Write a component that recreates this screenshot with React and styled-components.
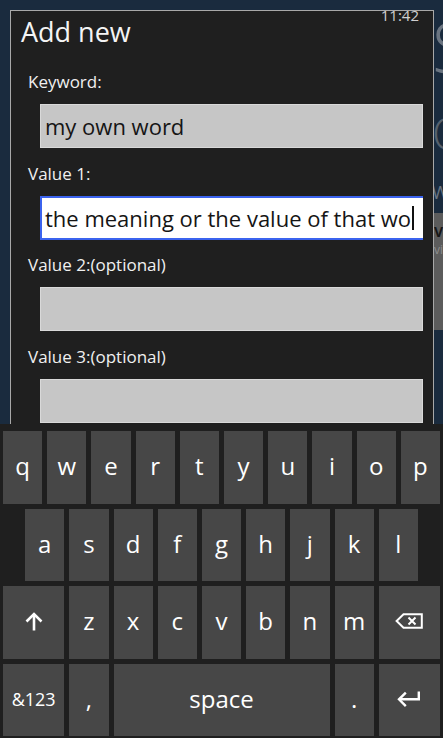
import React from "react";
import styled, { createGlobalStyle } from "styled-components";

const GlobalStyle = createGlobalStyle`
  html, body {
    margin: 0;
    padding: 0;
    width: 443px;
    height: 738px;
    overflow: hidden;
    background: #1a2b3e;
  }
  body {
    font-family: "Open Sans", "Noto Sans", sans-serif;
  }
`;

const Screen = styled.div`
  position: relative;
  width: 443px;
  height: 738px;
  overflow: hidden;
  background: #1a2b3e;
`;

/* the page behind the dialog, only a sliver shows on the right */
const Backdrop = styled.div`
  display: flex;
  flex-direction: column;
  padding: 11px 0 0 432px;
  white-space: nowrap;
`;

const BigWord = styled.div`
  font-size: ${(p) => p.$size}px;
  line-height: 1;
  font-weight: 300;
  color: ${(p) => p.$color};
  margin-top: ${(p) => p.$gap || 0}px;
`;

const SmallWord = styled.div`
  font-size: 18px;
  line-height: 22px;
  color: #6a7683;
  margin-top: ${(p) => p.$gap || 0}px;
`;

const BackPanel = styled.div`
  margin: 10px 0 0 -40px;
  padding: 9px 0 0 42px;
  height: 108px;
  background: #5c5c5c;
  div:first-child {
    font-size: 14px;
    font-weight: 700;
    color: #161616;
  }
  div:last-child {
    font-size: 12px;
    color: #8d8d8d;
  }
`;

const Clock = styled.div`
  position: absolute;
  top: 5px;
  right: 24px;
  font-size: 15px;
  line-height: 20px;
  color: #cfcfcf;
  z-index: 3;
`;

const Dialog = styled.div`
  position: absolute;
  top: 10px;
  left: 10px;
  width: 424px;
  bottom: -20px;
  box-sizing: border-box;
  border: 1px solid #a8a8a8;
  background: #1f1f1f;
  padding: 3px 10px 0 10px;
  display: flex;
  flex-direction: column;
`;

const Title = styled.h1`
  margin: 0;
  font-size: 27px;
  line-height: 36px;
  font-weight: 400;
  color: #f4f4f4;
`;

const Form = styled.div`
  display: flex;
  flex-direction: column;
  padding-left: 7px;
  margin-top: 21px;
`;

const Field = styled.div`
  display: flex;
  flex-direction: column;
  & + & {
    margin-top: 14.5px;
  }
`;

const Label = styled.div`
  font-size: 17px;
  line-height: 22px;
  color: #f0f0f0;
  margin-bottom: 11px;
`;

const Box = styled.div`
  margin-left: 12px;
  height: 44px;
  box-sizing: border-box;
  display: flex;
  align-items: center;
  font-size: 22px;
  color: #151515;
  white-space: nowrap;
  overflow: hidden;
  background: ${(p) => (p.$focused ? "#ffffff" : "#c6c6c6")};
  border: ${(p) => (p.$focused ? "2.5px solid #3b63ee" : "1px solid #d9d9d9")};
  border-right-width: ${(p) => (p.$focused ? 0 : "1px")};
  padding: 0 ${(p) => (p.$focused ? "0 0 3px" : "4px")};
`;

const Caret = styled.span`
  display: inline-block;
  width: 2px;
  height: 24px;
  margin-left: 1px;
  background: #111;
`;

const Keyboard = styled.div`
  position: absolute;
  left: 0;
  right: 0;
  bottom: 0;
  height: 314px;
  box-sizing: border-box;
  padding: 7px 3px 2px;
  background: #1f1f1f;
  display: flex;
  flex-direction: column;
  gap: 5px;
  z-index: 2;
`;

const KeyRow = styled.div`
  display: grid;
  grid-template-columns: repeat(20, 1fr);
  column-gap: 5px;
  height: 72.5px;
`;

const Key = styled.div`
  grid-column: ${(p) => (p.$start ? `${p.$start} / span ${p.$span || 2}` : `span ${p.$span || 2}`)};
  background: #474747;
  display: flex;
  align-items: center;
  justify-content: center;
  color: #ffffff;
  font-size: ${(p) => p.$size || 24}px;
  font-weight: 500;
  line-height: 1;
  padding-bottom: 2px;
  box-sizing: border-box;
`;

const ShiftIcon = () => (
  <svg width="20" height="20" viewBox="0 0 20 20" fill="none" stroke="#fff" strokeWidth="2.6">
    <path d="M10 19.5V3" />
    <path d="M2.5 10.5L10 3l7.5 7.5" />
  </svg>
);

const BackspaceIcon = () => (
  <svg width="28" height="16" viewBox="0 0 28 16" fill="none" stroke="#fff" strokeWidth="2">
    <path d="M8.5 1.2H26.8V14.8H8.5L1.6 8Z" strokeLinejoin="miter" />
    <path d="M13.5 4.5l7 7M20.5 4.5l-7 7" />
  </svg>
);

const EnterIcon = () => (
  <svg width="24" height="16" viewBox="0 0 24 16" fill="none" stroke="#fff" strokeWidth="2.4">
    <path d="M21.8 0.5V8.3H2.5" />
    <path d="M8.8 1.6L2 8.3l6.8 6.8" />
  </svg>
);

const row1 = ["q", "w", "e", "r", "t", "y", "u", "i", "o", "p"];
const row2 = ["a", "s", "d", "f", "g", "h", "j", "k", "l"];
const row3 = ["z", "x", "c", "v", "b", "n", "m"];

const fields = [
  { label: "Keyword:", value: "my own word" },
  { label: "Value 1:", value: "the meaning or the value of that wo", focused: true },
  { label: "Value 2:(optional)", value: "" },
  { label: "Value 3:(optional)", value: "" },
];

export default function App() {
  return (
    <>
      <GlobalStyle />
      <Screen>
        <Backdrop>
          <BigWord $size={70} $color="#6b7581">
            Saved
          </BigWord>
          <BigWord $size={44} $color="#56616d" $gap={30}>
            Other
          </BigWord>
          <SmallWord $gap={26}>Words</SmallWord>
          <BackPanel>
            <div>Vocabulary</div>
            <div>view</div>
          </BackPanel>
        </Backdrop>

        <Clock>11:42</Clock>

        <Dialog>
          <Title>Add new</Title>
          <Form>
            {fields.map((f) => (
              <Field key={f.label}>
                <Label>{f.label}</Label>
                <Box $focused={f.focused}>
                  {f.value}
                  {f.focused && <Caret />}
                </Box>
              </Field>
            ))}
          </Form>
        </Dialog>

        <Keyboard>
          <KeyRow>
            {row1.map((k) => (
              <Key key={k}>{k}</Key>
            ))}
          </KeyRow>
          <KeyRow>
            {row2.map((k, i) => (
              <Key key={k} $start={i === 0 ? 2 : undefined}>
                {k}
              </Key>
            ))}
          </KeyRow>
          <KeyRow>
            <Key $span={3}>
              <ShiftIcon />
            </Key>
            {row3.map((k) => (
              <Key key={k}>{k}</Key>
            ))}
            <Key $span={3}>
              <BackspaceIcon />
            </Key>
          </KeyRow>
          <KeyRow>
            <Key $span={3} $size={18}>
              &amp;123
            </Key>
            <Key>,</Key>
            <Key $span={10}>space</Key>
            <Key>.</Key>
            <Key $span={3}>
              <EnterIcon />
            </Key>
          </KeyRow>
        </Keyboard>
      </Screen>
    </>
  );
}
